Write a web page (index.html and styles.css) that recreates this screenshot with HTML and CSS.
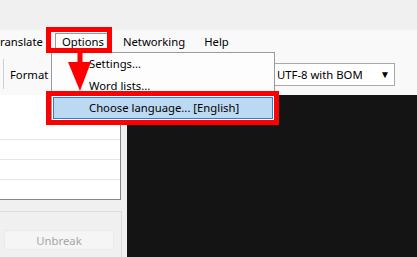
FILE: index.html
```html
<!DOCTYPE html>
<html lang="en">
<head>
    <meta charset="UTF-8">
    <title>Options menu</title>
    <link rel="stylesheet" href="styles.css">
</head>
<body>
    <div class="window">
        <div class="title-strip"></div>

        <nav class="menubar">
            <span class="menu-item first">ranslate</span>
            <span class="menu-item open">Options</span>
            <span class="menu-item">Networking</span>
            <span class="menu-item">Help</span>
        </nav>

        <div class="toolbar">
            <span class="tb-sep"></span>
            <span class="tb-label">Format</span>
            <div class="combo">
                <span>UTF-8 with BOM</span>
                <span class="combo-arrow">&#9660;</span>
            </div>
        </div>

        <div class="workspace">
            <div class="sidebar">
                <div class="list">
                    <div class="list-row"></div>
                    <div class="list-row"></div>
                    <div class="list-row"></div>
                    <div class="list-row"></div>
                </div>
                <div class="group">
                    <button class="btn" disabled>Unbreak</button>
                </div>
            </div>
            <div class="editor"></div>
        </div>

        <!-- open Options menu -->
        <div class="dropdown">
            <div class="dropdown-item">Settings...</div>
            <div class="dropdown-item">Word lists...</div>
            <div class="dropdown-item active">Choose language... [English]</div>
        </div>

        <!-- annotations -->
        <div class="callout callout-menu"></div>
        <div class="callout callout-item"></div>
        <svg class="arrow" width="30" height="40" viewBox="0 0 30 40">
            <rect x="11.5" y="0" width="5" height="11" fill="#ff0000"/>
            <polygon points="2,10 25,10 14,39" fill="#ff0000"/>
        </svg>
    </div>
</body>
</html>
```

FILE: styles.css
```css
:root {
    --strip-bg: #f0f0f0;
    --bar-bg: #f9f9f9;
    --panel-bg: #f0f0f0;
    --editor-bg: #141414;
    --annot: #ff0000;
    --hl-bg: #bcd9f3;
    --hl-border: #2f7fd0;
    --text: #000000;
}

* {
    margin: 0;
    padding: 0;
    box-sizing: border-box;
}

body {
    font-family: 'Noto Sans', 'Open Sans', sans-serif;
    font-size: 11.3px;
    color: var(--text);
    background: var(--panel-bg);
}

.window {
    position: relative;
    width: 417px;
    height: 257px;
    overflow: hidden;
    display: flex;
    flex-direction: column;
}

.title-strip {
    flex-shrink: 0;
    height: 30px;
    background-color: var(--strip-bg);
}

.menubar {
    flex-shrink: 0;
    display: flex;
    align-items: center;
    height: 23px;
    background-color: var(--bar-bg);
}

.menu-item {
    padding: 0 6px;
    margin-right: 5px;
    line-height: 15px;
    border: 1px solid transparent;
}

.menu-item.first {
    margin-left: -7px;
}

.menu-item.open {
    background-color: #fdfdfd;
    border-color: #9a9a9a;
}

.toolbar {
    flex-shrink: 0;
    display: flex;
    align-items: center;
    height: 42px;
    background-color: var(--bar-bg);
}

.tb-sep {
    width: 1px;
    height: 30px;
    margin-left: 3px;
    background-color: #cfcfcf;
}

.tb-label {
    margin-left: 6px;
}

.combo {
    display: flex;
    align-items: center;
    justify-content: space-between;
    width: 122px;
    height: 23px;
    margin-left: auto;
    margin-right: 22px;
    padding: 0 4px 0 3px;
    background-color: #fff;
    border: 1px solid #a9a9a9;
}

.combo-arrow {
    font-size: 10px;
}

.workspace {
    flex: 1;
    min-height: 0;
    display: flex;
}

.sidebar {
    width: 127px;
    background-color: var(--panel-bg);
}

.list {
    width: 121px;
    height: 105px;
    padding-top: 25px;
    overflow: hidden;
    background-color: #fff;
    border-right: 1px solid #84888e;
    border-bottom: 1px solid #84888e;
}

.list-row {
    height: 20px;
    border-bottom: 1px solid #e6e6e6;
}

.group {
    width: 122px;
    height: 46px;
    margin-top: 11px;
    padding: 18px 0 0 4px;
    border-top: 1px solid #dcdcdc;
    border-right: 1px solid #dcdcdc;
}

.btn {
    display: block;
    width: 110px;
    height: 20px;
    font-family: inherit;
    font-size: 11.3px;
    color: #a6a6a6;
    background-color: #f5f5f5;
    border: 1px dotted #dedede;
    border-radius: 3px;
}

.editor {
    flex: 1;
    background-color: var(--editor-bg);
}

.dropdown {
    position: absolute;
    left: 51px;
    top: 52px;
    width: 224px;
    height: 72px;
    padding: 0 1px;
    background-color: #fdfdfd;
    border: 1px solid #9a9a9a;
}

.dropdown-item {
    height: 22px;
    line-height: 20px;
    padding-left: 35px;
    border: 1px solid transparent;
    white-space: nowrap;
}

.dropdown-item.active {
    background-color: var(--hl-bg);
    border-color: var(--hl-border);
}

.callout {
    position: absolute;
    border: 5px solid var(--annot);
}

.callout-menu {
    left: 46px;
    top: 27px;
    width: 66px;
    height: 26px;
}

.callout-item {
    left: 46px;
    top: 91px;
    width: 233px;
    height: 34px;
}

.arrow {
    position: absolute;
    left: 66px;
    top: 52px;
}
```
